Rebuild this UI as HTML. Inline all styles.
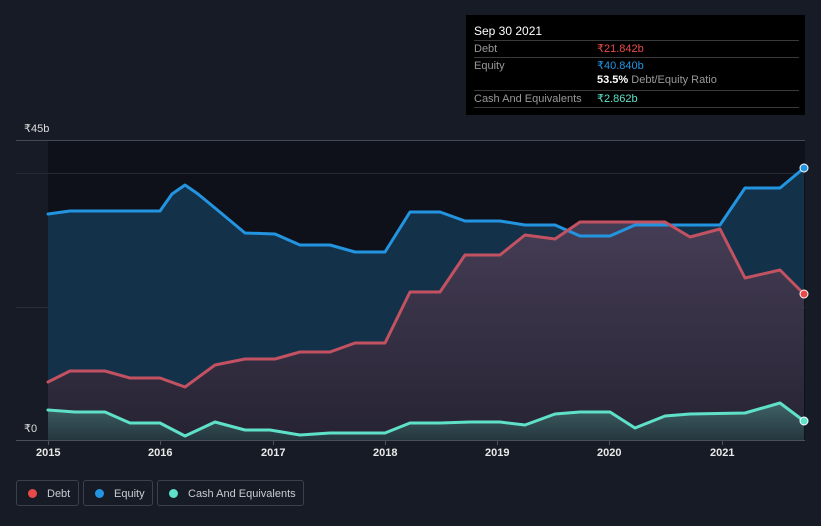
<!DOCTYPE html>
<html><head><meta charset="utf-8"><style>
body{margin:0;width:821px;height:526px;background:#161b25;font-family:"Liberation Sans",sans-serif;overflow:hidden;position:relative}
.tt{position:absolute;left:466px;top:15px;width:339px;height:100px;background:#000;color:#fff;font-size:11px}
.row{position:absolute;left:8px;width:325px;border-top:1px solid #3a3a3a;height:16px;line-height:16px}
.lab{color:#999}
.leg{position:absolute;top:480px;height:26px;border:1px solid #3b414c;border-radius:3px;color:#c8ccd2;font-size:11px;line-height:26px;box-sizing:border-box}
.dot{display:inline-block;width:9px;height:9px;border-radius:50%;margin:0 10px 0 11px;vertical-align:-1px}
.ax{position:absolute;top:447px;color:#e8e8e8;font-size:11px;font-weight:bold}
</style></head><body>
<svg width="821" height="526" style="position:absolute;left:0;top:0">
<defs>
<linearGradient id="dg" x1="0" y1="0" x2="0" y2="1"><stop offset="0" stop-color="#453d55"/><stop offset="1" stop-color="#262333"/></linearGradient>
<linearGradient id="cg" x1="0" y1="0" x2="0" y2="1"><stop offset="0" stop-color="#3f6266"/><stop offset="1" stop-color="#25363e"/></linearGradient>
</defs>
<rect x="48" y="140" width="757" height="300" fill="#0e1119"/>
<line x1="16" y1="140.5" x2="805" y2="140.5" stroke="#444a55"/>
<line x1="16" y1="173.5" x2="805" y2="173.5" stroke="#252932"/>
<line x1="16" y1="307.5" x2="805" y2="307.5" stroke="#2a2e38"/>
<polygon fill="#14314a" points="48,214 70,211 160,211 172,194 185,185 198,194 215,208 245,233 275,234 300,245 330,245 355,252 385,252 410,212 440,212 465,221 500,221 525,225 555,225 580,236 610,236 635,225 720,225 745,188 780,188 804,168 804,440 48,440"/>
<polygon fill="url(#dg)" points="48,382 70,371 105,371 130,378 160,378 185,387 215,365 245,359 275,359 300,352 330,352 355,343 385,343 410,292 440,292 465,255 500,255 525,235 555,239 580,222 610,222 665,222 690,237 720,229 745,278 780,270 804,294 804,440 48,440"/>
<polygon fill="url(#cg)" points="48,410 75,412 105,412 130,423 160,423 185,436 215,422 245,430 270,430 300,435 330,433 385,433 410,423 440,423 470,422 500,422 525,425 555,414 580,412 610,412 635,428 665,416 690,414 745,413 780,403 804,421 804,440 48,440"/>
<g fill="none" stroke-width="3" stroke-linejoin="round" stroke-linecap="round">
<polyline stroke="#2394e0" points="48,214 70,211 160,211 172,194 185,185 198,194 215,208 245,233 275,234 300,245 330,245 355,252 385,252 410,212 440,212 465,221 500,221 525,225 555,225 580,236 610,236 635,225 720,225 745,188 780,188 804,168"/>
<polyline stroke="#c25262" points="48,382 70,371 105,371 130,378 160,378 185,387 215,365 245,359 275,359 300,352 330,352 355,343 385,343 410,292 440,292 465,255 500,255 525,235 555,239 580,222 610,222 665,222 690,237 720,229 745,278 780,270 804,294"/>
<polyline stroke="#5fe0c8" points="48,410 75,412 105,412 130,423 160,423 185,436 215,422 245,430 270,430 300,435 330,433 385,433 410,423 440,423 470,422 500,422 525,425 555,414 580,412 610,412 635,428 665,416 690,414 745,413 780,403 804,421"/>
</g>
<line x1="16" y1="440.5" x2="805" y2="440.5" stroke="#4a4f58"/>
<g stroke="#4a4f58"><line x1="48.5" y1="440" x2="48.5" y2="445"/><line x1="160.5" y1="440" x2="160.5" y2="445"/><line x1="273.5" y1="440" x2="273.5" y2="445"/><line x1="385.5" y1="440" x2="385.5" y2="445"/><line x1="497.5" y1="440" x2="497.5" y2="445"/><line x1="609.5" y1="440" x2="609.5" y2="445"/><line x1="722.5" y1="440" x2="722.5" y2="445"/></g>
<circle cx="804" cy="168" r="4" fill="#2394e0" stroke="#fff" stroke-width="1"/>
<circle cx="804" cy="294" r="4" fill="#e84a4a" stroke="#fff" stroke-width="1"/>
<circle cx="804" cy="421" r="4" fill="#5fe0c8" stroke="#fff" stroke-width="1"/>
</svg>
<div style="position:absolute;left:24px;top:122px;color:#ddd;font-size:11px">₹45b</div>
<div style="position:absolute;left:24px;top:422px;color:#ddd;font-size:11px">₹0</div>
<div class="ax" style="left:36px">2015</div><div class="ax" style="left:148px">2016</div><div class="ax" style="left:261px">2017</div><div class="ax" style="left:373px">2018</div><div class="ax" style="left:485px">2019</div><div class="ax" style="left:597px">2020</div><div class="ax" style="left:710px">2021</div>
<div class="tt">
<div style="position:absolute;left:8px;top:9px;font-size:12px">Sep 30 2021</div>
<div class="row" style="top:25px"><span class="lab">Debt</span><span style="position:absolute;left:123px;color:#e84a4a">₹21.842b</span></div>
<div class="row" style="top:42px"><span class="lab">Equity</span><span style="position:absolute;left:123px;color:#2394e0">₹40.840b</span></div>
<div style="position:absolute;left:131px;top:59px"><b>53.5%</b> <span class="lab">Debt/Equity Ratio</span></div>
<div class="row" style="top:75px;border-bottom:1px solid #3a3a3a"><span class="lab">Cash And Equivalents</span><span style="position:absolute;left:123px;color:#5fe0c8">₹2.862b</span></div>
</div>
<div class="leg" style="left:16px;width:63px"><span class="dot" style="background:#e84a4a"></span>Debt</div>
<div class="leg" style="left:83px;width:70px"><span class="dot" style="background:#2394e0"></span>Equity</div>
<div class="leg" style="left:157px;width:147px"><span class="dot" style="background:#5fe0c8"></span>Cash And Equivalents</div>
</body></html>
